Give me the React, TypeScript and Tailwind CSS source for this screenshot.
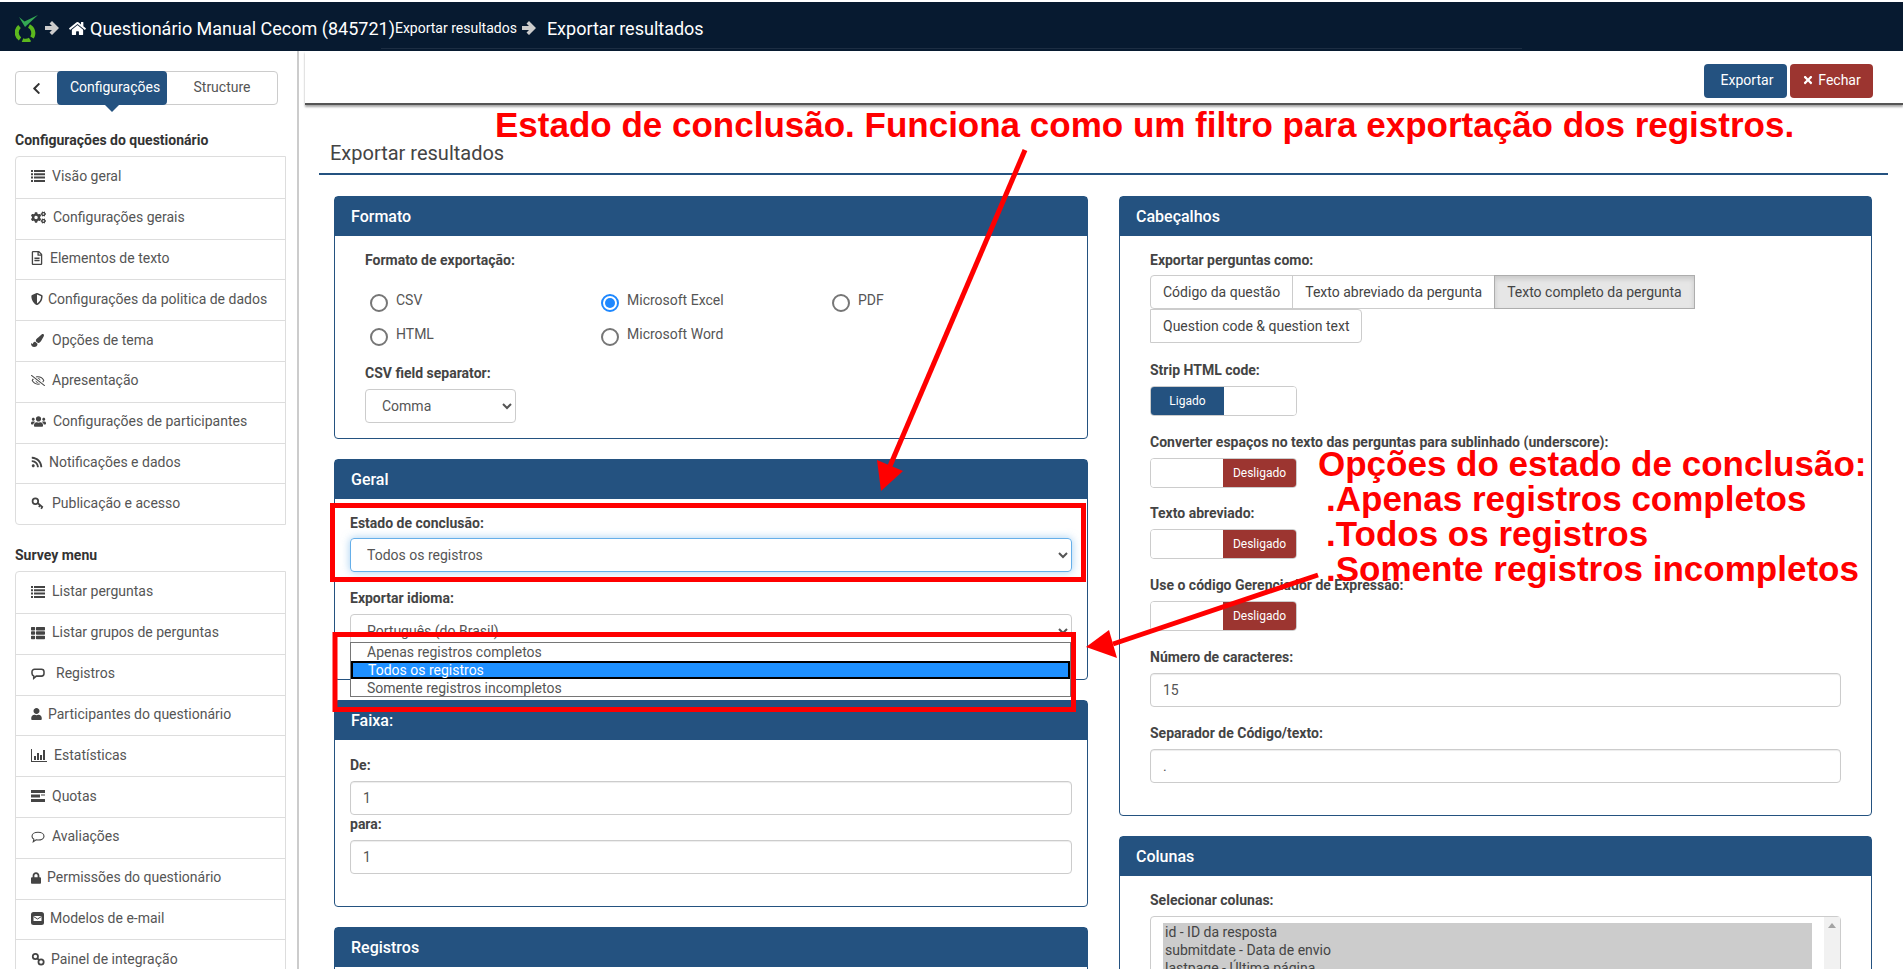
import type { ReactNode } from 'react';
import {
  FaChevronLeft, FaCogs, FaHome, FaLock, FaPaintBrush,
  FaRegEyeSlash, FaRegFileAlt, FaRss, FaShieldAlt, FaThList, FaTimes, FaUser, FaUsers,
} from 'react-icons/fa';

const BoldArrow = ({ className }: { className: string }) => (
  <svg viewBox="0 0 16 16" className={className} fill="currentColor">
    <path d="M8 1l7 7-7 7-2.500-2.500L8 10H1V6h7L5.500 3.500z" />
  </svg>
);

const ListIcon = () => (
  <svg viewBox="0 0 14 12" className="w-[14px] h-[12px]" fill="currentColor">
    <path d="M0 0h2v2H0zM3 0h11v2H3zM0 3.300h2v2H0zM3 3.300h11v2H3zM0 6.600h2v2H0zM3 6.600h11v2H3zM0 10h2v2H0zM3 10h11v2H3z" />
  </svg>
);

const KeyIcon = () => (
  <svg viewBox="0 0 16 16" className="w-[14px] h-[14px]" fill="none" stroke="currentColor" strokeWidth="2">
    <circle cx="5" cy="6" r="3.200" />
    <path d="M7.500 8l6 5M10.500 10.500l-1.500 2M13 12.500l-1.500 2" />
  </svg>
);

const LinkIcon = () => (
  <svg viewBox="0 0 16 16" className="w-[14px] h-[14px]" fill="none" stroke="currentColor" strokeWidth="2">
    <circle cx="5" cy="5" r="3" />
    <circle cx="11.500" cy="11.500" r="3" />
    <path d="M7.500 7.500l2 2" />
  </svg>
);

const BubbleIcon = () => (
  <svg viewBox="0 0 16 14" className="w-[14px] h-[12px]" fill="none" stroke="currentColor" strokeWidth="1.800">
    <path d="M4 1.500h8a3 3 0 0 1 3 3v2a3 3 0 0 1-3 3H6l-3 2.500V9.300A3 3 0 0 1 1 6.500v-2a3 3 0 0 1 3-3z" />
  </svg>
);

const ThinBubbleIcon = () => (
  <svg viewBox="0 0 16 14" className="w-[14px] h-[12px]" fill="none" stroke="currentColor" strokeWidth="1.300">
    <path d="M8 1.500c4 0 7 1.900 7 4.500s-3 4.500-7 4.500c-.8 0-1.500 0-2.200-.2L2.500 12.500l.7-3C1.800 8.600 1 7.400 1 6c0-2.600 3-4.500 7-4.500z" />
  </svg>
);

const BarsIcon = () => (
  <svg viewBox="0 0 16 13" className="w-[16px] h-[13px]" fill="currentColor">
    <path d="M0 0h1v12h15v1H0zM3 7h2v4H3zM6 4h2v7H6zM9 6h2v5H9zM12 1h2v10h-2z" />
  </svg>
);

const TasksIcon = () => (
  <svg viewBox="0 0 14 12" className="w-[14px] h-[12px]" fill="currentColor">
    <path d="M0 0h14v3H0zM0 4.500h9v3H0zM10 4.500h4v1H10zM0 9h14v3H0z" />
  </svg>
);

const MailIcon = () => (
  <svg viewBox="0 0 13 13" className="w-[13px] h-[13px]">
    <rect width="13" height="13" rx="2.500" fill="currentColor" />
    <path d="M2.500 4h8v5h-8z" fill="#fff" />
    <path d="M2.500 4.500l4 2.500 4-2.500" fill="none" stroke="currentColor" strokeWidth="1" />
  </svg>
);

const surveySettings = [
  { label: 'Visão geral', icon: <ListIcon />, box: 'w-[21px]' },
  { label: 'Configurações gerais', icon: <FaCogs className="w-[15px] h-[15px]" />, box: 'w-[22px]' },
  { label: 'Elementos de texto', icon: <FaRegFileAlt className="w-[12px] h-[14px]" />, box: 'w-[19px]' },
  { label: 'Configurações da politica de dados', icon: <FaShieldAlt className="w-[12px] h-[14px]" />, box: 'w-[17px]' },
  { label: 'Opções de tema', icon: <FaPaintBrush className="w-[13px] h-[13px]" />, box: 'w-[21px]' },
  { label: 'Apresentação', icon: <FaRegEyeSlash className="w-[14px] h-[13px]" />, box: 'w-[21px]' },
  { label: 'Configurações de participantes', icon: <FaUsers className="w-[15px] h-[15px]" />, box: 'w-[22px]' },
  { label: 'Notificações e dados', icon: <FaRss className="w-[12px] h-[12px]" />, box: 'w-[18px]' },
  { label: 'Publicação e acesso', icon: <KeyIcon />, box: 'w-[21px]' },
];

const surveyMenu = [
  { label: 'Listar perguntas', icon: <ListIcon />, box: 'w-[21px]' },
  { label: 'Listar grupos de perguntas', icon: <FaThList className="w-[14px] h-[14px]" />, box: 'w-[21px]' },
  { label: 'Registros', icon: <BubbleIcon />, box: 'w-[25px]' },
  { label: 'Participantes do questionário', icon: <FaUser className="w-[11px] h-[12px]" />, box: 'w-[17px]' },
  { label: 'Estatísticas', icon: <BarsIcon />, box: 'w-[23px]' },
  { label: 'Quotas', icon: <TasksIcon />, box: 'w-[21px]' },
  { label: 'Avaliações', icon: <ThinBubbleIcon />, box: 'w-[21px]' },
  { label: 'Permissões do questionário', icon: <FaLock className="w-[10px] h-[12px]" />, box: 'w-[16px]' },
  { label: 'Modelos de e-mail', icon: <MailIcon />, box: 'w-[19px]' },
  { label: 'Painel de integração', icon: <LinkIcon />, box: 'w-[20px]' },
];

const SideList = ({ items }: { items: typeof surveyMenu }) => (
  <div className="border border-[#ddd] rounded-l-[4px] bg-white">
    {items.map((item, i) => (
      <div
        key={item.label}
        className={`flex items-center h-[40.8px] pl-[15px] pb-[2px] text-[#555] ${i > 0 ? 'border-t border-[#ddd]' : ''}`}
      >
        <span className={`${item.box} flex items-center text-[#444]`}>{item.icon}</span>
        <span>{item.label}</span>
      </div>
    ))}
  </div>
);

const Panel = ({ title, children }: { title: string; children: ReactNode }) => (
  <div className="border border-[#245280] rounded-[4px] bg-white mb-[20px]">
    <div className="h-[39px] bg-[#245280] pl-[16px] flex items-center text-white text-[16px] font-medium">{title}</div>
    {children}
  </div>
);

const Label = ({ children, className = '' }: { children: ReactNode; className?: string }) => (
  <div className={`h-[20px] leading-[20px] font-bold text-[#444] ${className}`}>{children}</div>
);

const TextInput = ({ value }: { value: string }) => (
  <input
    readOnly
    value={value}
    className="block w-full h-[34px] mt-[6px] px-3 border border-[#ccc] rounded-[4px] text-[#555] shadow-[inset_0_1px_1px_rgba(0,0,0,0.075)]"
  />
);

const Radio = ({ label, checked = false }: { label: string; checked?: boolean }) => (
  <div className="flex items-start h-[34px] text-[#555]">
    <span
      className={`w-[18px] h-[18px] mt-[8px] mr-[8px] rounded-full border-2 flex items-center justify-center ${
        checked ? 'border-[#1e88ff]' : 'border-[#767676]'
      }`}
    >
      {checked && <span className="w-[10px] h-[10px] rounded-full bg-[#1e88ff]" />}
    </span>
    <span className="mt-[4px]">{label}</span>
  </div>
);

const Switch = ({ on }: { on: boolean }) => (
  <div className="flex w-[147px] h-[30px] mt-[6px] border border-[#ccc] rounded-[4px] overflow-hidden text-[12px] text-white">
    {on ? (
      <>
        <div className="w-[73px] bg-[#245280] flex items-center justify-center">Ligado</div>
        <div className="flex-1 bg-white" />
      </>
    ) : (
      <>
        <div className="w-[72px] bg-white" />
        <div className="flex-1 bg-[#9c3530] flex items-center justify-center">Desligado</div>
      </>
    )}
  </div>
);

const App = () => {
  return (
    <div className="relative h-[969px] overflow-hidden bg-white pt-[2px] font-['Roboto',sans-serif] text-[14px]">
      {/* Top bar */}
      <div className="relative h-[49px] bg-[#071a30] flex items-center pt-[3px] text-white">
        <svg viewBox="0 0 24 27" className="ml-[15px] w-[24px] h-[27px] mt-[1px]">
          <path d="M4.500 11.500A8 8 0 0 0 5 24" fill="none" stroke="#5cb81e" strokeWidth="4" />
          <path d="M7.500 25.200A8 8 0 0 0 15 24.500" fill="none" stroke="#5cb81e" strokeWidth="4" />
          <path d="M17 22.500A8 8 0 0 0 14 11" fill="none" stroke="#5cb81e" strokeWidth="4" />
          <path d="M4 2l5.500 4.500L23 0 10 12z" fill="#34a853" />
        </svg>
        <BoldArrow className="ml-[5px] w-[16px] h-[16px] text-[#ccc]" />
        <FaHome className="ml-[9px] w-[17px] h-[15px]" />
        <span className="ml-[4px] text-[18px]">Questionário Manual Cecom (845721)</span>
        <span className="text-[14px]">Exportar resultados</span>
        <BoldArrow className="ml-[4px] w-[16px] h-[16px] text-[#ccc]" />
        <span className="ml-[10px] text-[18px]">Exportar resultados</span>
        <div className="absolute left-[381px] right-[381px] bottom-[2px] h-px bg-[#1c2d42]" />
      </div>

      <div className="flex">
        {/* Sidebar */}
        <aside className="w-[299px] shrink-0 h-[918px] border-r-2 border-[#ccc] pl-[15px] pr-[11px] pt-[20px]">
          <div className="relative flex h-[34px] w-[263px] border border-[#ccc] rounded-[4px] text-[#555]">
            <div className="w-[41px] flex items-center justify-center text-[#333]">
              <FaChevronLeft className="w-[11px] h-[13px]" />
            </div>
            <div className="relative -my-px w-[110px] bg-[#245280] text-white rounded-[4px] flex items-center justify-center pl-[6px] pb-[2px]">
              Configurações
              <div className="absolute left-1/2 -translate-x-1/2 top-full w-0 h-0 border-x-[7px] border-x-transparent border-t-[7px] border-t-[#245280]" />
            </div>
            <div className="flex-1 flex items-center justify-center pb-[2px]">Structure</div>
          </div>
          <div className="mt-[25px] mb-[6px] h-[20px] leading-[20px] font-bold text-[#333]">Configurações do questionário</div>
          <SideList items={surveySettings} />
          <div className="mt-[20px] mb-[6px] h-[20px] leading-[20px] font-bold text-[#333]">Survey menu</div>
          <SideList items={surveyMenu} />
        </aside>

        {/* Main */}
        <main className="flex-1 min-w-0">
          <div className="ml-[6px] h-[54px] flex justify-end items-start pt-[13px] pr-[30px] gap-[3px] border-b-2 border-[#555] shadow-[0_2px_2px_rgba(0,0,0,0.35)]">
            <button className="w-[83px] h-[34px] pl-[3px] pb-[2px] bg-[#245280] text-white rounded-[4px]">Exportar</button>
            <button className="w-[83px] h-[34px] pb-[2px] bg-[#9c3530] text-white rounded-[4px] flex items-center justify-center gap-[4px]">
              <FaTimes className="w-[12px] h-[12px]" /> Fechar
            </button>
          </div>

          <div className="ml-[20px] mr-[15px] mt-[1px] h-[69px] border-b-2 border-[#245280] pl-[11px] pt-[33px] text-[20px] leading-[28px] text-[#444]">
            Exportar resultados
          </div>

          <div className="ml-[35px] mt-[21px] grid grid-cols-[754px_753px] gap-x-[31px] items-start">
            {/* Left column */}
            <div>
              <Panel title="Formato">
                <div className="pl-[30px] pt-[14px] pb-[15px]">
                  <Label>Formato de exportação:</Label>
                  <div className="mt-[16px] ml-[5px] grid grid-cols-[231px_231px_231px]">
                    <Radio label="CSV" />
                    <Radio label="Microsoft Excel" checked />
                    <Radio label="PDF" />
                    <Radio label="HTML" />
                    <Radio label="Microsoft Word" />
                  </div>
                  <Label className="mt-[9px]">CSV field separator:</Label>
                  <select className="block w-[151px] h-[34px] mt-[6px] px-3 border border-[#ccc] rounded-[4px] text-[#555]">
                    <option>Comma</option>
                  </select>
                </div>
              </Panel>

              <Panel title="Geral">
                <div className="relative px-[15px] pt-[14px] pb-[31px]">
                  <Label>Estado de conclusão:</Label>
                  <select
                    defaultValue="Todos os registros"
                    className="block w-full h-[34px] mt-[5px] px-3 border border-[#66afe9] rounded-[4px] text-[#555] shadow-[0_0_8px_rgba(102,175,233,0.6)]"
                  >
                    <option>Apenas registros completos</option>
                    <option>Todos os registros</option>
                    <option>Somente registros incompletos</option>
                  </select>
                  <Label className="mt-[16px]">Exportar idioma:</Label>
                  <select className="block w-full h-[34px] mt-[6px] px-3 border border-[#ccc] rounded-[4px] text-[#555]">
                    <option>Português (do Brasil)</option>
                  </select>

                  {/* Open dropdown of the status select */}
                  <div className="absolute left-[15px] top-[143px] w-[721px] h-[55px] bg-white border border-[#767676] text-[#555] leading-[18px]">
                    <div className="h-[18px] pl-[16px]">Apenas registros completos</div>
                    <div className="h-[18px] pl-[15px] bg-[#1e90ff] text-white border-2 border-black leading-[14px]">Todos os registros</div>
                    <div className="h-[18px] pl-[16px]">Somente registros incompletos</div>
                  </div>
                </div>
              </Panel>

              <Panel title="Faixa:">
                <div className="px-[15px] pt-[15px] pb-[32px]">
                  <Label>De:</Label>
                  <TextInput value="1" />
                  <Label className="-mt-px">para:</Label>
                  <TextInput value="1" />
                </div>
              </Panel>

              <Panel title="Registros">
                <div className="h-[100px]" />
              </Panel>
            </div>

            {/* Right column */}
            <div>
              <Panel title="Cabeçalhos">
                <div className="px-[30px] pt-[14px] pb-[32px]">
                  <Label>Exportar perguntas como:</Label>
                  <div className="mt-[5px] flex flex-wrap text-[#444]">
                    <div className="h-[34px] px-3 flex items-center border border-[#ccc] rounded-l-[4px]">Código da questão</div>
                    <div className="h-[34px] px-3 flex items-center border border-[#ccc] -ml-px">Texto abreviado da pergunta</div>
                    <div className="h-[34px] px-3 flex items-center border border-[#adadad] -ml-px bg-[#e6e6e6] shadow-[inset_0_3px_5px_rgba(0,0,0,0.125)]">Texto completo da pergunta</div>
                    <div className="h-[34px] px-3 flex items-center border border-[#ccc] rounded-r-[4px]">Question code &amp; question text</div>
                  </div>
                  <Label className="mt-[17px]">Strip HTML code:</Label>
                  <Switch on />
                  <Label className="mt-[16px]">Converter espaços no texto das perguntas para sublinhado (underscore):</Label>
                  <Switch on={false} />
                  <Label className="mt-[15px]">Texto abreviado:</Label>
                  <Switch on={false} />
                  <Label className="mt-[16px]">Use o código Gerenciador de Expressão:</Label>
                  <Switch on={false} />
                  <Label className="mt-[16px]">Número de caracteres:</Label>
                  <TextInput value="15" />
                  <Label className="mt-[16px]">Separador de Código/texto:</Label>
                  <TextInput value="." />
                </div>
              </Panel>

              <Panel title="Colunas">
                <div className="px-[30px] pt-[14px]">
                  <Label>Selecionar colunas:</Label>
                  <div className="mt-[6px] relative h-[120px] border border-[#ccc] rounded-[4px] pl-[12px] pr-[28px] pt-[6px] text-[#444] leading-[18px]">
                    <div className="bg-[#cccccc] pl-[2px]">
                      <div className="h-[18px]">id - ID da resposta</div>
                      <div className="h-[18px]">submitdate - Data de envio</div>
                      <div className="h-[18px]">lastpage - Última página</div>
                    </div>
                    <div className="absolute right-0 top-0 bottom-0 w-[16px] bg-[#f1f1f1] flex justify-center pt-[6px]">
                      <div className="w-0 h-0 border-x-[4px] border-x-transparent border-b-[5px] border-b-[#a3a3a3]" />
                    </div>
                  </div>
                </div>
              </Panel>
            </div>
          </div>
        </main>
      </div>

      {/* Red annotations on top of the screenshot */}
      <svg className="absolute inset-0 w-[1903px] h-[969px] pointer-events-none" viewBox="0 0 1903 969">
        <rect x="332.500" y="505.500" width="751" height="74" fill="none" stroke="#f00" strokeWidth="5" />
        <rect x="335" y="634.500" width="738.500" height="75" fill="none" stroke="#f00" strokeWidth="5" />
        <path d="M1025 150L890 466" fill="none" stroke="#f00" strokeWidth="5" />
        <path d="M881 491L877 460L903 471z" fill="#f00" />
        <path d="M1318 575L1113 644" fill="none" stroke="#f00" strokeWidth="5" />
        <path d="M1086 647L1109 630L1117 658z" fill="#f00" />
      </svg>
      <div className="absolute left-[495px] top-[104px] font-['Liberation_Sans',sans-serif] font-bold text-[35px] leading-[42px] text-[#f00] whitespace-nowrap">
        Estado de conclusão. Funciona como um filtro para exportação dos registros.
      </div>
      <div className="absolute left-[1318px] top-[446px] font-['Liberation_Sans',sans-serif] font-bold text-[35px] leading-[35px] text-[#f00] whitespace-nowrap">
        <div>Opções do estado de conclusão:</div>
        <div className="pl-[8px]">.Apenas registros completos</div>
        <div className="pl-[8px]">.Todos os registros</div>
        <div className="pl-[8px]">.Somente registros incompletos</div>
      </div>
    </div>
  );
};

export default App;
